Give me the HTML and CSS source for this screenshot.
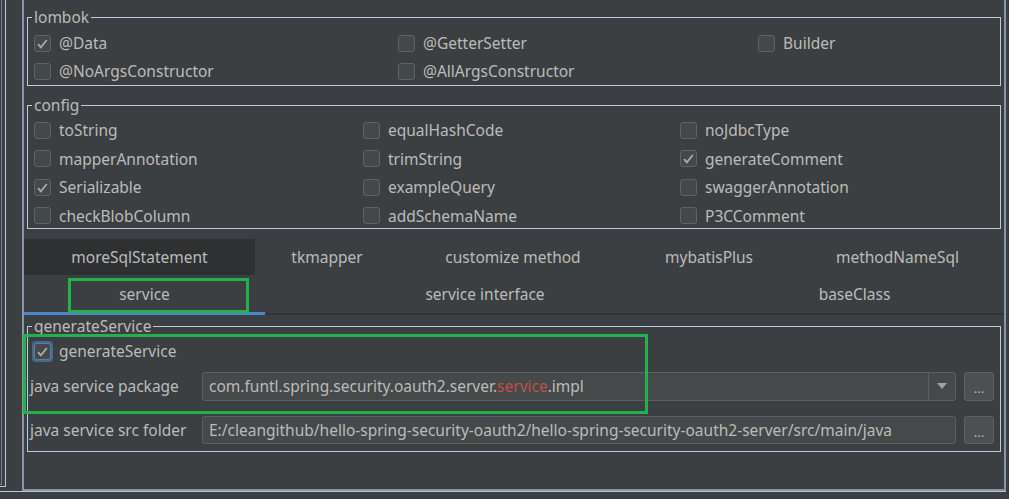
FILE: index.html
```html
<!DOCTYPE html>
<html>
<head>
<meta charset="utf-8">
<link rel="stylesheet" href="styles.css">
</head>
<body>
<div class="app">
  <div class="side"><div class="side-outer"><div class="side-inner"></div></div></div>
  <div class="main">
    <section class="group lombok">
      <span class="group-title">lombok</span>
      <div class="grid lombok-grid">
        <label class="cb"><span class="box"><svg viewBox="0 0 17 17"><path d="M3.5 9.2L6.6 12.8L13.4 4.6"/></svg></span>@Data</label>
        <label class="cb"><span class="box"></span>@GetterSetter</label>
        <label class="cb"><span class="box"></span>Builder</label>
        <label class="cb"><span class="box"></span>@NoArgsConstructor</label>
        <label class="cb"><span class="box"></span>@AllArgsConstructor</label>
      </div>
    </section>

    <section class="group config">
      <span class="group-title">config</span>
      <div class="grid config-grid">
        <label class="cb"><span class="box"></span>toString</label>
        <label class="cb"><span class="box"></span>equalHashCode</label>
        <label class="cb"><span class="box"></span>noJdbcType</label>
        <label class="cb"><span class="box"></span>mapperAnnotation</label>
        <label class="cb"><span class="box"></span>trimString</label>
        <label class="cb"><span class="box"><svg viewBox="0 0 17 17"><path d="M3.5 9.2L6.6 12.8L13.4 4.6"/></svg></span>generateComment</label>
        <label class="cb"><span class="box"><svg viewBox="0 0 17 17"><path d="M3.5 9.2L6.6 12.8L13.4 4.6"/></svg></span>Serializable</label>
        <label class="cb"><span class="box"></span>exampleQuery</label>
        <label class="cb"><span class="box"></span>swaggerAnnotation</label>
        <label class="cb"><span class="box"></span>checkBlobColumn</label>
        <label class="cb"><span class="box"></span>addSchemaName</label>
        <label class="cb"><span class="box"></span>P3CComment</label>
      </div>
    </section>

    <div class="tabs">
      <div class="tab-row row1">
        <div class="tab hover">moreSqlStatement</div>
        <div class="tab">tkmapper</div>
        <div class="tab">customize method</div>
        <div class="tab">mybatisPlus</div>
        <div class="tab">methodNameSql</div>
      </div>
      <div class="tab-row row2">
        <div class="tab selected">service</div>
        <div class="tab">service interface</div>
        <div class="tab">baseClass</div>
      </div>
    </div>

    <section class="group gen">
      <span class="group-title">generateService</span>
      <div class="gen-check">
        <label class="cb"><span class="ring"><span class="box focus"><svg viewBox="0 0 17 17"><path d="M3.5 9.2L6.6 12.8L13.4 4.6"/></svg></span></span>generateService</label>
      </div>
      <div class="field-row first">
        <span class="field-label">java service package</span>
        <div class="combo">
          <span class="combo-text">com.funtl.spring.security.oauth2.server.<span class="red">service</span>.impl</span>
          <span class="combo-arrow"><span class="tri"></span></span>
        </div>
        <span class="btn">...</span>
      </div>
      <div class="field-row second">
        <span class="field-label">java service src folder</span>
        <div class="input">E:/cleangithub/hello-spring-security-oauth2/hello-spring-security-oauth2-server/src/main/java</div>
        <span class="btn">...</span>
      </div>
    </section>

    <div class="mark mark-tab"></div>
    <div class="mark mark-gen"></div>
  </div>
</div>
</body>
</html>
```

FILE: styles.css
```css
* { box-sizing: border-box; }

body {
  margin: 0;
  background: #3c3f41;
  font-family: "Noto Sans", "Open Sans", sans-serif;
  font-size: 15.5px;
  color: #bbbbbb;
}

.app {
  display: flex;
  width: 1006px;
  height: 492px;
  border-bottom: 1px solid #b4c7da;
}

.side { width: 22px; flex: none; }
.side-outer {
  width: 6px;
  height: 487px;
  border-right: 1px solid #b6c9dc;
  border-bottom: 1px solid #b6c9dc;
}
.side-inner {
  width: 2px;
  height: 485px;
  border-right: 1px solid #717d89;
  border-bottom: 1px solid #717d89;
}

.main {
  position: relative;
  width: 984px;
  height: 491px;
  border: 2px solid #8797a7;
  border-top: none;
  padding: 17px 3px 0 3px;
}

.group {
  position: relative;
  border: 1px solid #b8cbdf;
}
.group-title {
  position: absolute;
  left: 4px;
  top: -10px;
  padding: 0 2px;
  line-height: 18px;
  background: #3c3f41;
}

.grid { display: grid; grid-auto-rows: 20px; }

.lombok { height: 69px; padding: 15px 0 0 6px; }
.lombok-grid { grid-template-columns: 364px 360px 1fr; row-gap: 8px; }

.config { margin-top: 19px; padding: 14px 0 2px 6px; }
.config-grid { grid-template-columns: 329px 317px 1fr; row-gap: 8.67px; }

.cb {
  display: flex;
  align-items: center;
  gap: 8px;
  height: 20px;
  white-space: nowrap;
}
.box {
  flex: none;
  width: 17px;
  height: 17px;
  border: 1px solid #606366;
  border-radius: 3px;
  background: #43494a;
  display: flex;
}
.box svg { width: 15px; height: 15px; }
.box path { fill: none; stroke: #acacac; stroke-width: 2; }
.ring {
  flex: none;
  width: 21px;
  height: 21px;
  border-radius: 4px;
  background: #46698d;
  display: flex;
  align-items: center;
  justify-content: center;
}
.box.focus { border-color: #5f7d9c; background: #45494b; }

.tabs { margin: 10px -3px 0; }
.tab-row { display: grid; }
.row1 { grid-template-columns: 231px 144px 228px 164px 1fr; height: 36px; }
.row2 {
  grid-template-columns: 241px 440px 1fr;
  height: 40px;
  border-bottom: 2px solid #313335;
}
.tab {
  position: relative;
  display: flex;
  align-items: center;
  justify-content: center;
  white-space: nowrap;
}
.tab.hover { background: #2e3032; }
.tab.selected::after {
  content: "";
  position: absolute;
  left: 0;
  right: 0;
  bottom: -2px;
  height: 3px;
  background: #4a88c7;
}

.gen { margin-top: 11px; height: 126px; padding: 14px 6px 0 2px; }
.gen-check { padding-left: 2px; }
.gen-check .cb { height: 21px; gap: 6px; }

.field-row { display: flex; align-items: center; height: 29px; white-space: nowrap; }
.field-row.first { margin-top: 10px; }
.field-row.second { margin-top: 15px; height: 28px; }
.field-label { width: 172px; flex: none; }
.combo, .input {
  width: 754px;
  height: 100%;
  flex: none;
  border: 1px solid #5c5f61;
  border-radius: 3px;
  background: #45494a;
  display: flex;
  align-items: center;
}
.combo-text { flex: 1; padding-left: 6px; }
.input { padding-left: 6px; }
.red { color: #c24f4c; }
.combo-arrow {
  width: 27px;
  height: 100%;
  border-left: 1px solid #5c5f61;
  display: flex;
  align-items: center;
  justify-content: center;
}
.tri {
  width: 0;
  height: 0;
  border-left: 5px solid transparent;
  border-right: 5px solid transparent;
  border-top: 6px solid #9fa2a4;
}
.btn {
  margin-left: 8px;
  width: 30px;
  height: 100%;
  flex: none;
  border: 1px solid #5e6264;
  border-radius: 3px;
  background: #4c5052;
  display: flex;
  align-items: center;
  justify-content: center;
  font-size: 13px;
  padding-top: 4px;
}

.mark {
  position: absolute;
  border: 3px solid #22b14c;
}
.mark-tab { left: 44px; top: 278px; width: 181px; height: 35px; }
.mark-gen { left: -1px; top: 334px; width: 625px; height: 80px; }
```
